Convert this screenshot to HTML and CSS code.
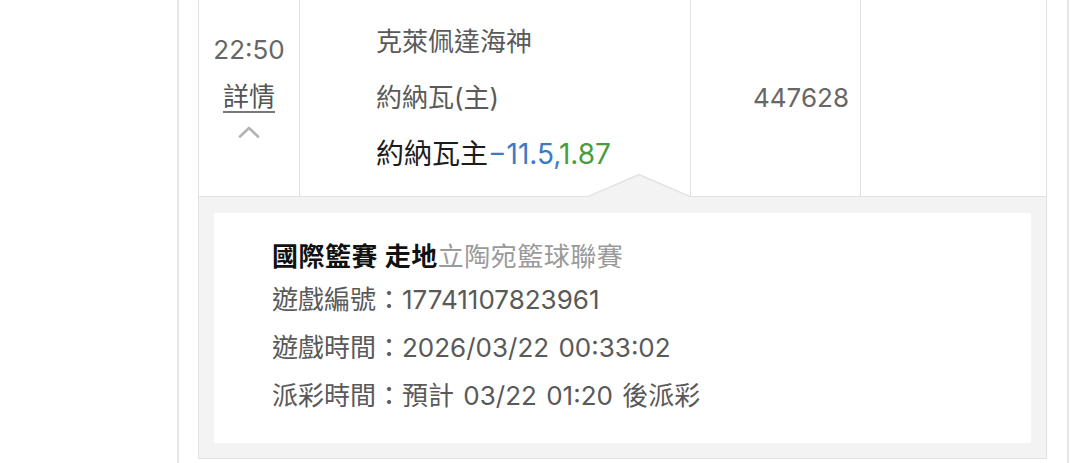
FILE: index.html
```html
<!DOCTYPE html>
<html lang="zh-Hant">
<head>
<meta charset="utf-8">
<title>注單詳情</title>
<link rel="stylesheet" href="styles.css">
</head>
<body>
<div class="page">
  <div class="bet-row">
    <div class="cell cell-time">
      <div class="time">22:50</div>
      <a class="detail-link">詳情</a>
      <svg class="caret" width="22" height="12" viewBox="0 0 22 12" aria-hidden="true">
        <polyline points="2,10.5 11,2 20,10.5" fill="none" stroke="#b3b3b3" stroke-width="2.6" stroke-linecap="round" stroke-linejoin="round"/>
      </svg>
    </div>
    <div class="cell cell-match">
      <div class="line team">克萊佩達海神</div>
      <div class="line team">約納瓦(主)</div>
      <div class="line pick">約納瓦主<span class="hcap">−11.5</span><span class="sep">,</span><span class="odds">1.87</span></div>
    </div>
    <div class="cell cell-amount">447628</div>
    <div class="cell cell-empty"></div>
  </div>
  <div class="detail-panel">
    <svg class="notch" width="102" height="24" viewBox="0 0 102 24" aria-hidden="true">
      <polygon points="0,24 51,1.5 102,24" fill="#f3f3f3"/>
      <polyline points="0,23.5 51,1.5 102,23.5" fill="none" stroke="#e2e2e2" stroke-width="1.4"/>
    </svg>
    <div class="detail-box">
      <div class="detail-title"><strong>國際籃賽 走地</strong><span class="league">立陶宛籃球聯賽</span></div>
      <div class="detail-line">遊戲編號：17741107823961</div>
      <div class="detail-line">遊戲時間：2026/03/22 00:33:02</div>
      <div class="detail-line">派彩時間：預計 03/22 01:20 後派彩</div>
    </div>
  </div>
</div>
</body>
</html>
```

FILE: styles.css
```css
html, body {
  margin: 0;
  padding: 0;
  background: #ffffff;
}

body {
  font-family: Inter, "Noto Sans CJK TC", "Noto Sans", sans-serif;
  color: #555555;
}

.page {
  margin-left: 177px;
  width: 892px;
  height: 463px;
  box-sizing: border-box;
  border-left: 2px solid #e8e8e8;
  border-right: 2px solid #e8e8e8;
  padding: 0 20px 0 19px;
  overflow: hidden;
}

.bet-row {
  display: grid;
  grid-template-columns: 101px 391px 170px 1fr;
  height: 197px;
  box-sizing: border-box;
  border-left: 1px solid #e2e2e2;
  border-right: 1px solid #e2e2e2;
  border-bottom: 1px solid #e2e2e2;
}

.cell {
  border-right: 1px solid #e2e2e2;
  min-width: 0;
}

.cell-empty {
  border-right: none;
}

.cell-time {
  display: flex;
  flex-direction: column;
  align-items: center;
  padding-top: 30px;
}

.time {
  font-size: 26px;
  line-height: 40px;
  color: #666666;
}

.detail-link {
  margin-top: 7px;
  font-size: 26px;
  line-height: 40px;
  color: #555555;
  text-decoration: underline;
  text-decoration-color: #777777;
  text-underline-offset: 5px;
  text-decoration-thickness: 1.5px;
}

.caret {
  margin-top: 9px;
}

.cell-match {
  display: flex;
  flex-direction: column;
  padding: 14px 0 0 76px;
}

.line {
  line-height: 56px;
  white-space: nowrap;
}

.team {
  font-size: 26px;
  color: #5a5a5a;
}

.pick {
  font-size: 28px;
  color: #1c1c1c;
}

.hcap,
.sep {
  color: #3c7bc4;
}

.odds {
  color: #4a9d3c;
}

.cell-amount {
  display: flex;
  align-items: center;
  justify-content: flex-end;
  padding-right: 11px;
  padding-bottom: 2px;
  font-size: 26px;
  color: #666666;
}

.detail-panel {
  position: relative;
  background: #f3f3f3;
  border-left: 1px solid #e2e2e2;
  border-right: 1px solid #e2e2e2;
  border-bottom: 1px solid #e2e2e2;
  padding: 16px 15px 15px 15px;
}

.notch {
  position: absolute;
  top: -24px;
  left: 389px;
  display: block;
}

.detail-box {
  background: #ffffff;
  height: 230px;
  box-sizing: border-box;
  padding: 25px 0 0 58px;
}

.detail-title {
  font-size: 26px;
  line-height: 38px;
  letter-spacing: 0.5px;
  white-space: nowrap;
}

.detail-title strong {
  font-weight: 700;
  color: #111111;
}

.league {
  color: #9a9a9a;
}

.detail-line {
  font-size: 26px;
  line-height: 48px;
  word-spacing: 2px;
  color: #595959;
  white-space: nowrap;
}
```
